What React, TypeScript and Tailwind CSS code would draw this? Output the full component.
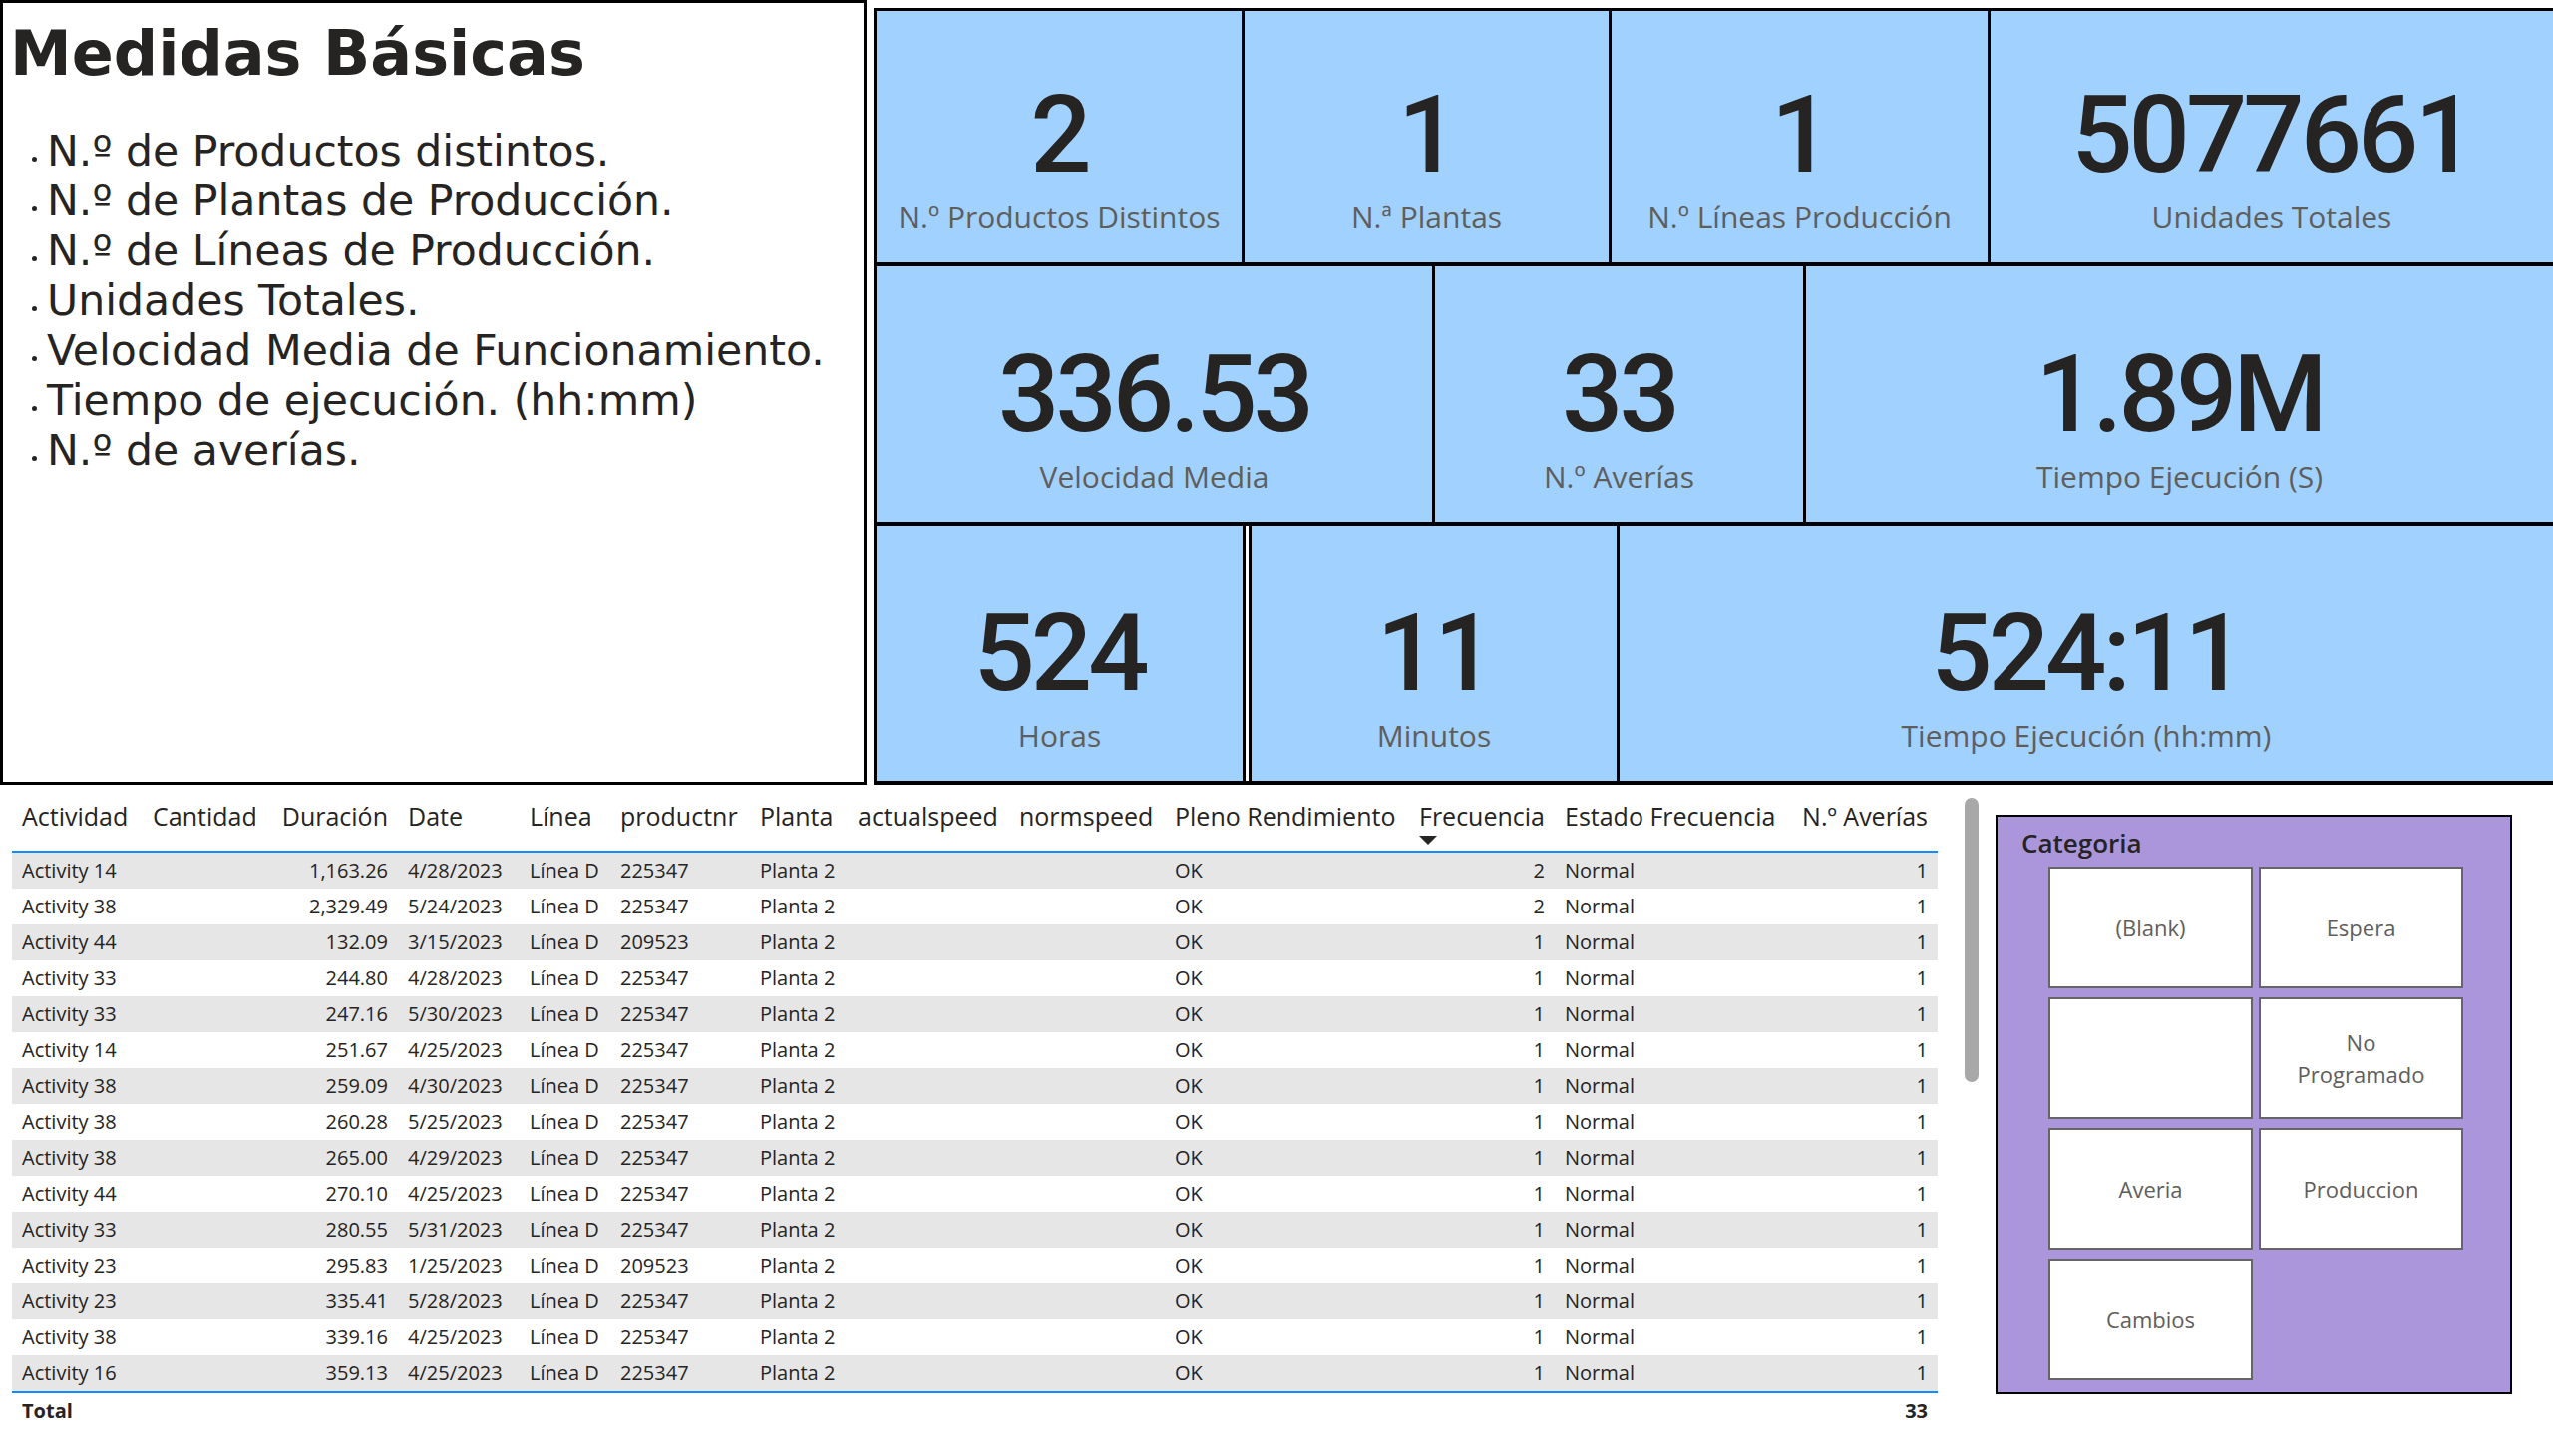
import React from "react"

const kpiRows = [
	{
		row: "h-[256px]",
		pad: "pt-[70px]",
		cells: [
			{ value: "2", label: "N.º Productos Distintos", cls: "w-[369px] border-r-[3px]" },
			{ value: "1", label: "N.ª Plantas", cls: "w-[368px] border-r-[3px]" },
			{ value: "1", label: "N.º Líneas Producción", cls: "w-[380px] border-r-[3px]" },
			{ value: "5077661", label: "Unidades Totales", cls: "flex-1" },
		],
	},
	{
		row: "h-[260px]",
		pad: "pt-[74px]",
		cells: [
			{ value: "336.53", label: "Velocidad Media", cls: "w-[560px] border-r-[3px]" },
			{ value: "33", label: "N.º Averías", cls: "w-[372px] border-r-[3px]" },
			{ value: "1.89M", label: "Tiempo Ejecución (S)", cls: "flex-1" },
		],
	},
	{
		row: "h-[260px]",
		pad: "pt-[74px]",
		cells: [
			{ value: "524", label: "Horas", cls: "w-[370px] border-r-[3px]" },
			{ value: "11", label: "Minutos", cls: "w-[372px] ml-[3px] border-x-[3px]" },
			{ value: "524:11", label: "Tiempo Ejecución (hh:mm)", cls: "flex-1" },
		],
	},
]

const medidas = [
	"N.º de Productos distintos.",
	"N.º de Plantas de Producción.",
	"N.º de Líneas de Producción.",
	"Unidades Totales.",
	"Velocidad Media de Funcionamiento.",
	"Tiempo de ejecución. (hh:mm)",
	"N.º de averías.",
]

const columns = [
	{ h: "Actividad", right: false },
	{ h: "Cantidad", right: false },
	{ h: "Duración", right: true },
	{ h: "Date", right: false },
	{ h: "Línea", right: false },
	{ h: "productnr", right: false },
	{ h: "Planta", right: false },
	{ h: "actualspeed", right: false },
	{ h: "normspeed", right: false },
	{ h: "Pleno Rendimiento", right: false },
	{ h: "Frecuencia", right: true, sorted: true },
	{ h: "Estado Frecuencia", right: false },
	{ h: "N.º Averías", right: true },
]

const rows: [string, string, string, string, string][] = [
	["Activity 14", "1,163.26", "4/28/2023", "225347", "2"],
	["Activity 38", "2,329.49", "5/24/2023", "225347", "2"],
	["Activity 44", "132.09", "3/15/2023", "209523", "1"],
	["Activity 33", "244.80", "4/28/2023", "225347", "1"],
	["Activity 33", "247.16", "5/30/2023", "225347", "1"],
	["Activity 14", "251.67", "4/25/2023", "225347", "1"],
	["Activity 38", "259.09", "4/30/2023", "225347", "1"],
	["Activity 38", "260.28", "5/25/2023", "225347", "1"],
	["Activity 38", "265.00", "4/29/2023", "225347", "1"],
	["Activity 44", "270.10", "4/25/2023", "225347", "1"],
	["Activity 33", "280.55", "5/31/2023", "225347", "1"],
	["Activity 23", "295.83", "1/25/2023", "209523", "1"],
	["Activity 23", "335.41", "5/28/2023", "225347", "1"],
	["Activity 38", "339.16", "4/25/2023", "225347", "1"],
	["Activity 16", "359.13", "4/25/2023", "225347", "1"],
]

const grid =
	"grid grid-cols-[131px_129px_127px_122px_91px_140px_98px_162px_156px_244px_147px_235px_149px]"

const tiles = ["(Blank)", "Espera", "", "No\nProgramado", "Averia", "Produccion", "Cambios"]

function Kpis() {
	return (
		<div className="flex-1 mt-[8px] ml-[7px] flex flex-col border-l-[3px] border-t-[3px] border-black">
			{kpiRows.map((r, i) => (
				<div key={i} className={`flex bg-white border-b-[4px] border-black ${r.row}`}>
					{r.cells.map((c) => (
						<div
							key={c.label}
							className={`flex flex-col items-center bg-[#A0D1FF] border-black ${c.cls} ${r.pad}`}
						>
							<div className="font-['Roboto',sans-serif] font-medium text-[108px] leading-none tracking-[-4px] text-[#252423]">
								{c.value}
							</div>
							<div className="mt-[14px] font-['Open_Sans',sans-serif] text-[30px] leading-none text-[#605E5C] whitespace-nowrap">
								{c.label}
							</div>
						</div>
					))}
				</div>
			))}
		</div>
	)
}

function Medidas() {
	return (
		<div className="w-[869px] h-[787px] border-[3px] border-black bg-white text-[#252423]">
			<h1 className="pl-[7px] pt-[20px] font-['DejaVu_Sans',sans-serif] font-bold text-[62px] leading-none">
				Medidas Básicas
			</h1>
			<ul className="mt-[41px] font-['DejaVu_Sans',sans-serif] text-[42.6px] leading-[50px]">
				{medidas.map((m) => (
					<li key={m} className="whitespace-nowrap">
						<span className="inline-block w-[5px] h-[5px] rounded-full bg-[#252423] ml-[29px] mr-[10px] mb-[4px]" />
						{m}
					</li>
				))}
			</ul>
		</div>
	)
}

function Tabla() {
	return (
		<div className="w-[1931px] mt-[3px] font-['Open_Sans',sans-serif] text-[#252423]">
			<div className={`${grid} h-[64px] items-end pb-[22px] border-b-2 border-[#118DFF] text-[25px] leading-none`}>
				{columns.map((c) => (
					<div
						key={c.h}
						className={`whitespace-nowrap ${c.right ? "text-right pr-[10px]" : "pl-[10px]"}`}
					>
						<span className="relative inline-block">
							{c.h}
							{c.sorted && (
								<svg
									className="absolute left-0 top-[32px]"
									width="18"
									height="9"
									viewBox="0 0 18 9"
								>
									<polygon points="0,0 18,0 9,9" fill="#252423" />
								</svg>
							)}
						</span>
					</div>
				))}
			</div>
			{rows.map((r, i) => (
				<div
					key={i}
					className={`${grid} h-[36px] items-center text-[20px] leading-none whitespace-nowrap ${
						i % 2 === 0 ? "bg-[#E6E6E6]" : "bg-white"
					}`}
				>
					<div className="pl-[10px]">{r[0]}</div>
					<div />
					<div className="text-right pr-[10px]">{r[1]}</div>
					<div className="pl-[10px]">{r[2]}</div>
					<div className="pl-[10px]">Línea D</div>
					<div className="pl-[10px]">{r[3]}</div>
					<div className="pl-[10px]">Planta 2</div>
					<div />
					<div />
					<div className="pl-[10px]">OK</div>
					<div className="text-right pr-[10px]">{r[4]}</div>
					<div className="pl-[10px]">Normal</div>
					<div className="text-right pr-[10px]">1</div>
				</div>
			))}
			<div className={`${grid} h-[38px] items-center border-t-2 border-[#118DFF] text-[20px] font-bold leading-none`}>
				<div className="pl-[10px]">Total</div>
				<div className="col-start-13 text-right pr-[10px]">33</div>
			</div>
		</div>
	)
}

function Categoria() {
	return (
		<div className="ml-[17px] mt-[29px] w-[518px] h-[581px] border-2 border-black bg-[#AB95DB] font-['Open_Sans',sans-serif]">
			<div className="pl-[24px] pt-[13px] text-[26px] font-semibold leading-none text-[#252423]">
				Categoria
			</div>
			<div className="mt-[11px] pl-[51px] grid grid-cols-[205px_205px] gap-x-[6px] gap-y-[9px]">
				{tiles.map((t, i) => (
					<div
						key={i}
						className="h-[122px] bg-white border-2 border-[#666666] flex items-center justify-center text-center whitespace-pre-line text-[22px] leading-[32px] text-[#605E5C]"
					>
						{t}
					</div>
				))}
			</div>
		</div>
	)
}

export default function App() {
	return (
		<div className="w-[2560px] h-[1460px] bg-white overflow-hidden">
			<div className="flex h-[787px]">
				<Medidas />
				<Kpis />
			</div>
			<div className="flex items-start pl-[12px] pt-[1px]">
				<Tabla />
				<div className="ml-[27px] mt-[12px] w-[14px] h-[285px] rounded-full bg-[#A8A8A8]" />
				<Categoria />
			</div>
		</div>
	)
}
